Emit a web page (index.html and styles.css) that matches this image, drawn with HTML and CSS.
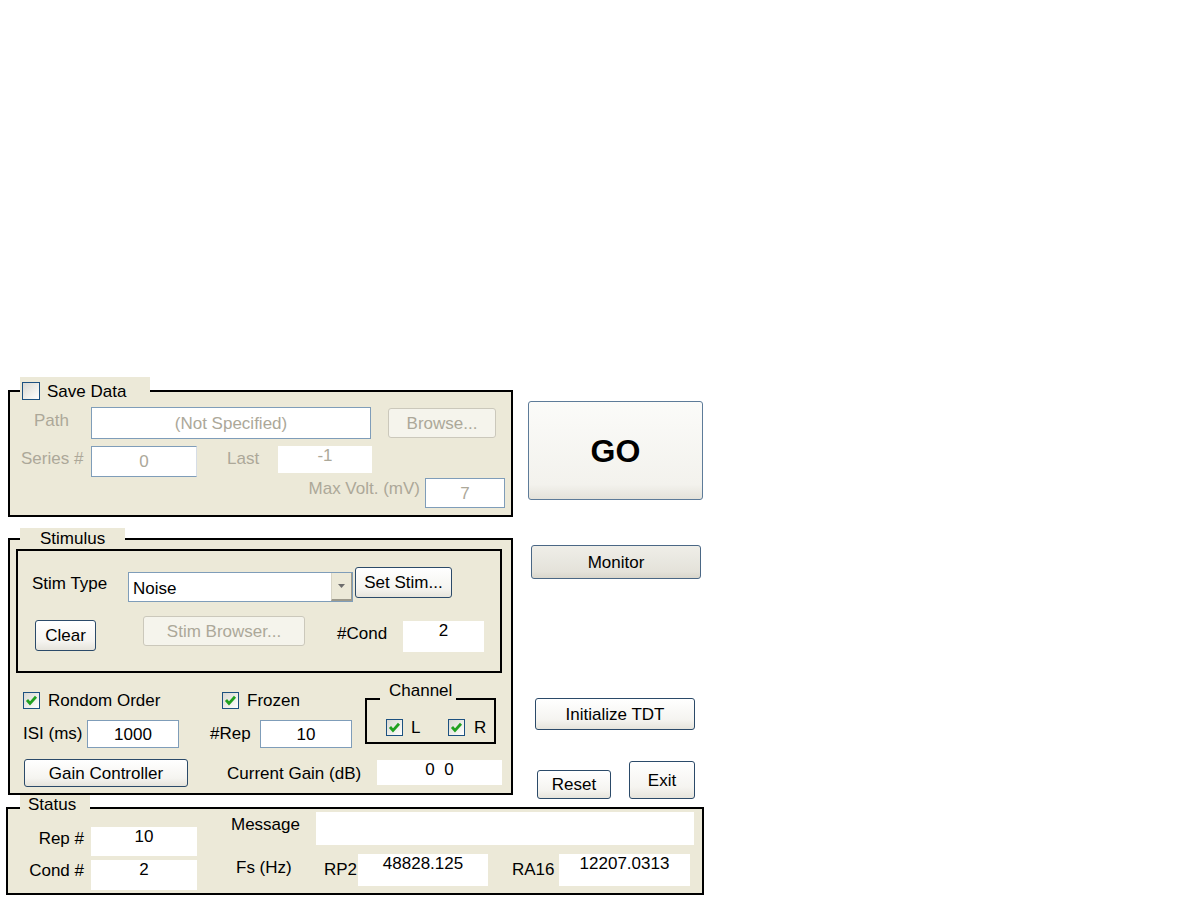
FILE: index.html
```html
<!DOCTYPE html>
<html>
<head>
<meta charset="utf-8">
<title>Stim Control</title>
<link rel="stylesheet" href="styles.css">
</head>
<body>
<div class="app">
  <div class="top">
    <div class="left">
      <div class="frame save">
        <div class="legend legend-save"><span class="cb"></span><span class="legend-text">Save Data</span></div>
        <div class="row">
          <span class="lbl dis lbl-path">Path</span>
          <div class="field bordered dis path-field">(Not Specified)</div>
          <div class="btn disabled browse">Browse...</div>
        </div>
        <div class="row row2">
          <span class="lbl dis lbl-series">Series #</span>
          <div class="field bordered dis series-field">0</div>
          <span class="lbl dis lbl-last">Last</span>
          <div class="field dis last-field">-1</div>
        </div>
        <div class="row row3">
          <span class="lbl dis lbl-max">Max Volt. (mV)</span>
          <div class="field bordered dis max-field">7</div>
        </div>
      </div>

      <div class="frame stim">
        <div class="legend legend-stim">Stimulus</div>
        <div class="inner">
          <div class="row">
            <span class="lbl lbl-stimtype">Stim Type</span>
            <div class="select">
              <span class="select-text">Noise</span>
              <span class="select-btn"><svg width="7" height="4" viewBox="0 0 7 4"><path d="M0 0H7L3.5 4Z" fill="#6d6d6d"/></svg></span>
            </div>
            <div class="btn setstim">Set Stim...</div>
          </div>
          <div class="row row-s2">
            <div class="btn clear">Clear</div>
            <div class="btn disabled stimbrowser">Stim Browser...</div>
            <span class="lbl lbl-cond">#Cond</span>
            <div class="field cond-field">2</div>
          </div>
        </div>
        <div class="stim-mid">
          <div class="stim-left">
            <div class="row rowA">
              <div class="cbgroup g-rondom"><span class="cb checked"><svg width="15" height="15" viewBox="0 0 15 15"><path d="M3 7L6 10.5L12 3.8" fill="none" stroke="#21a121" stroke-width="2.8"/></svg></span><span class="cb-text">Rondom Order</span></div>
              <div class="cbgroup"><span class="cb checked"><svg width="15" height="15" viewBox="0 0 15 15"><path d="M3 7L6 10.5L12 3.8" fill="none" stroke="#21a121" stroke-width="2.8"/></svg></span><span class="cb-text">Frozen</span></div>
            </div>
            <div class="row rowB">
              <span class="lbl lbl-isi">ISI (ms)</span>
              <div class="field bordered isi-field">1000</div>
              <span class="lbl lbl-rep">#Rep</span>
              <div class="field bordered rep-field">10</div>
            </div>
          </div>
          <div class="channel">
            <div class="legend legend-ch">Channel</div>
            <div class="cbgroup g-l"><span class="cb checked"><svg width="15" height="15" viewBox="0 0 15 15"><path d="M3 7L6 10.5L12 3.8" fill="none" stroke="#21a121" stroke-width="2.8"/></svg></span><span class="cb-text">L</span></div>
            <div class="cbgroup g-r"><span class="cb checked"><svg width="15" height="15" viewBox="0 0 15 15"><path d="M3 7L6 10.5L12 3.8" fill="none" stroke="#21a121" stroke-width="2.8"/></svg></span><span class="cb-text">R</span></div>
          </div>
        </div>
        <div class="row rowC">
          <div class="btn gain">Gain Controller</div>
          <span class="lbl lbl-gain">Current Gain (dB)</span>
          <div class="field gain-field">0&nbsp;&nbsp;0</div>
        </div>
      </div>
    </div>

    <div class="right">
      <div class="btn go">GO</div>
      <div class="btn monitor">Monitor</div>
      <div class="btn init">Initialize TDT</div>
      <div class="re-row">
        <div class="btn reset">Reset</div>
        <div class="btn exit">Exit</div>
      </div>
    </div>
  </div>

  <div class="frame status">
    <div class="legend legend-status">Status</div>
    <div class="st-left">
      <div class="row st-rep">
        <span class="lbl st-lbl">Rep #</span>
        <div class="field st-field">10</div>
      </div>
      <div class="row st-cond">
        <span class="lbl st-lbl st-lbl-cond">Cond #</span>
        <div class="field st-field st-field-cond">2</div>
      </div>
    </div>
    <div class="st-right">
      <div class="row st-msg">
        <span class="lbl lbl-msg">Message</span>
        <div class="field msg-field"></div>
      </div>
      <div class="row st-fs">
        <span class="lbl lbl-fs">Fs (Hz)</span>
        <span class="lbl lbl-rp2">RP2</span>
        <div class="field fs-field">48828.125</div>
        <span class="lbl lbl-ra16">RA16</span>
        <div class="field fs-field ra-field">12207.0313</div>
      </div>
    </div>
  </div>
</div>
</body>
</html>
```

FILE: styles.css
```css
html, body {
  margin: 0;
  padding: 0;
  background: #ffffff;
}
body {
  font-family: "Liberation Sans", Arial, sans-serif;
  font-size: 17px;
  color: #000;
  width: 1201px;
  height: 901px;
  overflow: hidden;
}
.app {
  padding-top: 390px;
}
.top {
  display: flex;
  align-items: flex-start;
}
.left {
  margin-left: 8px;
  width: 505px;
}
.frame {
  position: relative;
  box-sizing: border-box;
  border: 2px solid #000;
  background: #ece9d8;
}
.legend {
  position: absolute;
  background: #ece9d8;
  box-sizing: border-box;
  line-height: 20px;
  white-space: nowrap;
}
.row {
  display: flex;
  align-items: flex-start;
}
.lbl {
  line-height: 20px;
  padding-top: 1px;
  white-space: nowrap;
  flex: none;
}
.dis {
  color: #aca899;
}
.field {
  flex: none;
  box-sizing: border-box;
  background: #fff;
  text-align: center;
  white-space: nowrap;
}
.bordered {
  border: 1px solid #7f9db9;
}
.btn {
  flex: none;
  box-sizing: border-box;
  border: 1px solid #2b4a69;
  border-radius: 3px;
  background: linear-gradient(#ffffff, #f5f4f0 70%, #e6e4dc);
  display: flex;
  align-items: center;
  justify-content: center;
  white-space: nowrap;
  line-height: 20px;
  padding-top: 1px;
}
.btn.disabled {
  border-color: #cbc8bb;
  color: #aca899;
  background: #f5f4ec;
}

/* checkbox */
.cb {
  flex: none;
  display: inline-flex;
  align-items: center;
  justify-content: center;
  box-sizing: border-box;
  width: 17px;
  height: 17px;
  border: 1px solid #1c5180;
  background: linear-gradient(135deg, #d8d8d2, #f4f4f0 70%, #ffffff);
}
.cb svg {
  display: block;
}
.cbgroup {
  display: flex;
  align-items: center;
  flex: none;
}
.cb-text {
  margin-left: 8px;
  line-height: 17px;
  padding-top: 1px;
}

/* Save Data frame */
.save {
  height: 127px;
  padding-top: 15px;
}
.legend-save {
  top: -15px;
  left: 10px;
  width: 130px;
  height: 24px;
  padding: 5px 0 0 2px;
  display: flex;
  align-items: flex-start;
}
.legend-save .cb {
  width: 18px;
  height: 18px;
}
.legend-text {
  margin-left: 7px;
}
.lbl-path {
  margin-left: 24px;
  width: 57px;
  margin-top: 3px;
}
.path-field {
  width: 280px;
  height: 32px;
  line-height: 30px;
  padding-top: 1px;
}
.browse {
  margin-left: 17px;
  margin-top: 1px;
  width: 108px;
  height: 30px;
}
.row2 {
  margin-top: 7px;
}
.lbl-series {
  margin-left: 11px;
  width: 70px;
  margin-top: 2px;
}
.series-field {
  width: 106px;
  height: 31px;
  line-height: 29px;
  border-right-color: #d6dde6;
}
.lbl-last {
  margin-left: 30px;
  width: 51px;
  margin-top: 2px;
}
.last-field {
  width: 94px;
  height: 27px;
  line-height: 18px;
  padding-top: 1px;
}
.row3 {
  margin-top: 1px;
  justify-content: flex-end;
  padding-right: 6px;
}
.lbl-max {
  margin-right: 5px;
}
.max-field {
  width: 80px;
  height: 30px;
  line-height: 28px;
  padding-top: 1px;
}

/* Stimulus frame */
.stim {
  margin-top: 21px;
  height: 257px;
  padding-top: 9px;
}
.legend-stim {
  top: -12px;
  left: 10px;
  width: 105px;
  height: 20px;
  padding-left: 20px;
  padding-top: 1px;
}
.inner {
  margin-left: 6px;
  width: 486px;
  height: 124px;
  box-sizing: border-box;
  border: 2px solid #000;
  padding-top: 16px;
}
.lbl-stimtype {
  margin-left: 14px;
  width: 96px;
  margin-top: 6px;
}
.select {
  flex: none;
  box-sizing: border-box;
  width: 225px;
  height: 30px;
  margin-top: 5px;
  border: 1px solid #7f9db9;
  background: #fff;
  display: flex;
}
.select-text {
  flex: 1;
  padding-left: 4px;
  line-height: 29px;
  padding-top: 1px;
}
.select-btn {
  width: 21px;
  box-sizing: border-box;
  background: #ece9d8;
  border-left: 1px solid #d8d5c6;
  border-bottom: 2px solid #9d9a8c;
  border-right: 1px solid #9d9a8c;
  display: flex;
  align-items: center;
  justify-content: center;
}
.setstim {
  margin-left: 2px;
  width: 97px;
  height: 31px;
}
.row-s2 {
  margin-top: 14px;
}
.clear {
  margin-left: 17px;
  margin-top: 4px;
  width: 61px;
  height: 31px;
}
.stimbrowser {
  margin-left: 47px;
  width: 162px;
  height: 30px;
}
.lbl-cond {
  margin-left: 32px;
  width: 66px;
  margin-top: 7px;
}
.cond-field {
  width: 81px;
  height: 31px;
  margin-top: 5px;
  line-height: 18px;
  padding-top: 1px;
}
.stim-mid {
  display: flex;
  align-items: flex-start;
}
.stim-left {
  width: 342px;
  margin-top: 18px;
}
.rowA {
  height: 17px;
}
.g-rondom {
  margin-left: 13px;
  width: 199px;
}
.rowB {
  margin-top: 12px;
}
.lbl-isi {
  margin-left: 13px;
  width: 64px;
  margin-top: 3px;
}
.isi-field,
.rep-field {
  width: 92px;
  height: 28px;
  line-height: 26px;
  padding-top: 1px;
}
.lbl-rep {
  margin-left: 31px;
  width: 50px;
  margin-top: 3px;
}
.channel {
  position: relative;
  flex: none;
  box-sizing: border-box;
  margin-left: 13px;
  margin-top: 25px;
  width: 131px;
  height: 46px;
  border: 2px solid #000;
  padding: 18px 0 0 19px;
  display: flex;
  align-items: flex-start;
}
.legend-ch {
  top: -19px;
  left: 13px;
  height: 20px;
  padding: 0 4px 0 9px;
}
.g-l {
  width: 62px;
}
.g-r .cb-text {
  margin-left: 9px;
}
.rowC {
  margin-top: 11px;
}
.gain {
  margin-left: 14px;
  width: 164px;
  height: 28px;
}
.lbl-gain {
  margin-left: 39px;
  width: 150px;
  margin-top: 4px;
}
.gain-field {
  width: 125px;
  height: 25px;
  margin-top: 1px;
  line-height: 20px;
}

/* right column */
.right {
  margin-left: 15px;
  width: 175px;
  display: flex;
  flex-direction: column;
  align-items: flex-start;
}
.go {
  margin-top: 11px;
  width: 175px;
  height: 99px;
  font-size: 32px;
  font-weight: bold;
  line-height: 36px;
  border-color: #5d7b99;
  background: linear-gradient(#fbfbf9, #f3f2ed 85%, #e4e2da);
}
.monitor {
  margin-top: 45px;
  margin-left: 3px;
  width: 170px;
  height: 34px;
  background: linear-gradient(#efeee8, #e4e2da 80%, #d9d6cc);
  border-color: #4a6785;
}
.init {
  margin-top: 119px;
  margin-left: 7px;
  width: 160px;
  height: 32px;
}
.re-row {
  margin-top: 31px;
  display: flex;
  align-items: flex-start;
}
.reset {
  margin-left: 9px;
  margin-top: 9px;
  width: 74px;
  height: 29px;
}
.exit {
  margin-left: 18px;
  width: 66px;
  height: 38px;
}

/* Status frame */
.status {
  margin: 8px 0 0 6px;
  width: 698px;
  height: 88px;
  display: flex;
  align-items: flex-start;
}
.legend-status {
  top: -14px;
  left: 12px;
  width: 70px;
  height: 20px;
  padding-left: 8px;
}
.st-left {
  width: 189px;
  flex: none;
}
.st-rep {
  margin-top: 18px;
}
.st-lbl {
  width: 76px;
  text-align: right;
  margin-top: 1px;
}
.st-lbl-cond {
  margin-top: 0;
}
.st-field {
  margin-left: 7px;
  width: 106px;
  height: 29px;
  line-height: 18px;
  padding-top: 1px;
}
.st-cond {
  margin-top: 4px;
}
.st-field-cond {
  height: 30px;
}
.st-right {
  flex: none;
}
.st-msg {
  margin-top: 3px;
}
.lbl-msg {
  margin-left: 34px;
  width: 85px;
  margin-top: 2px;
}
.msg-field {
  width: 378px;
  height: 33px;
}
.st-fs {
  margin-top: 9px;
}
.lbl-fs {
  margin-left: 39px;
  width: 88px;
  margin-top: 3px;
}
.lbl-rp2 {
  width: 34px;
  margin-top: 5px;
}
.fs-field {
  width: 130px;
  height: 32px;
  line-height: 18px;
  padding-top: 1px;
}
.lbl-ra16 {
  margin-left: 24px;
  width: 47px;
  margin-top: 5px;
}
.ra-field {
  width: 131px;
}
```
